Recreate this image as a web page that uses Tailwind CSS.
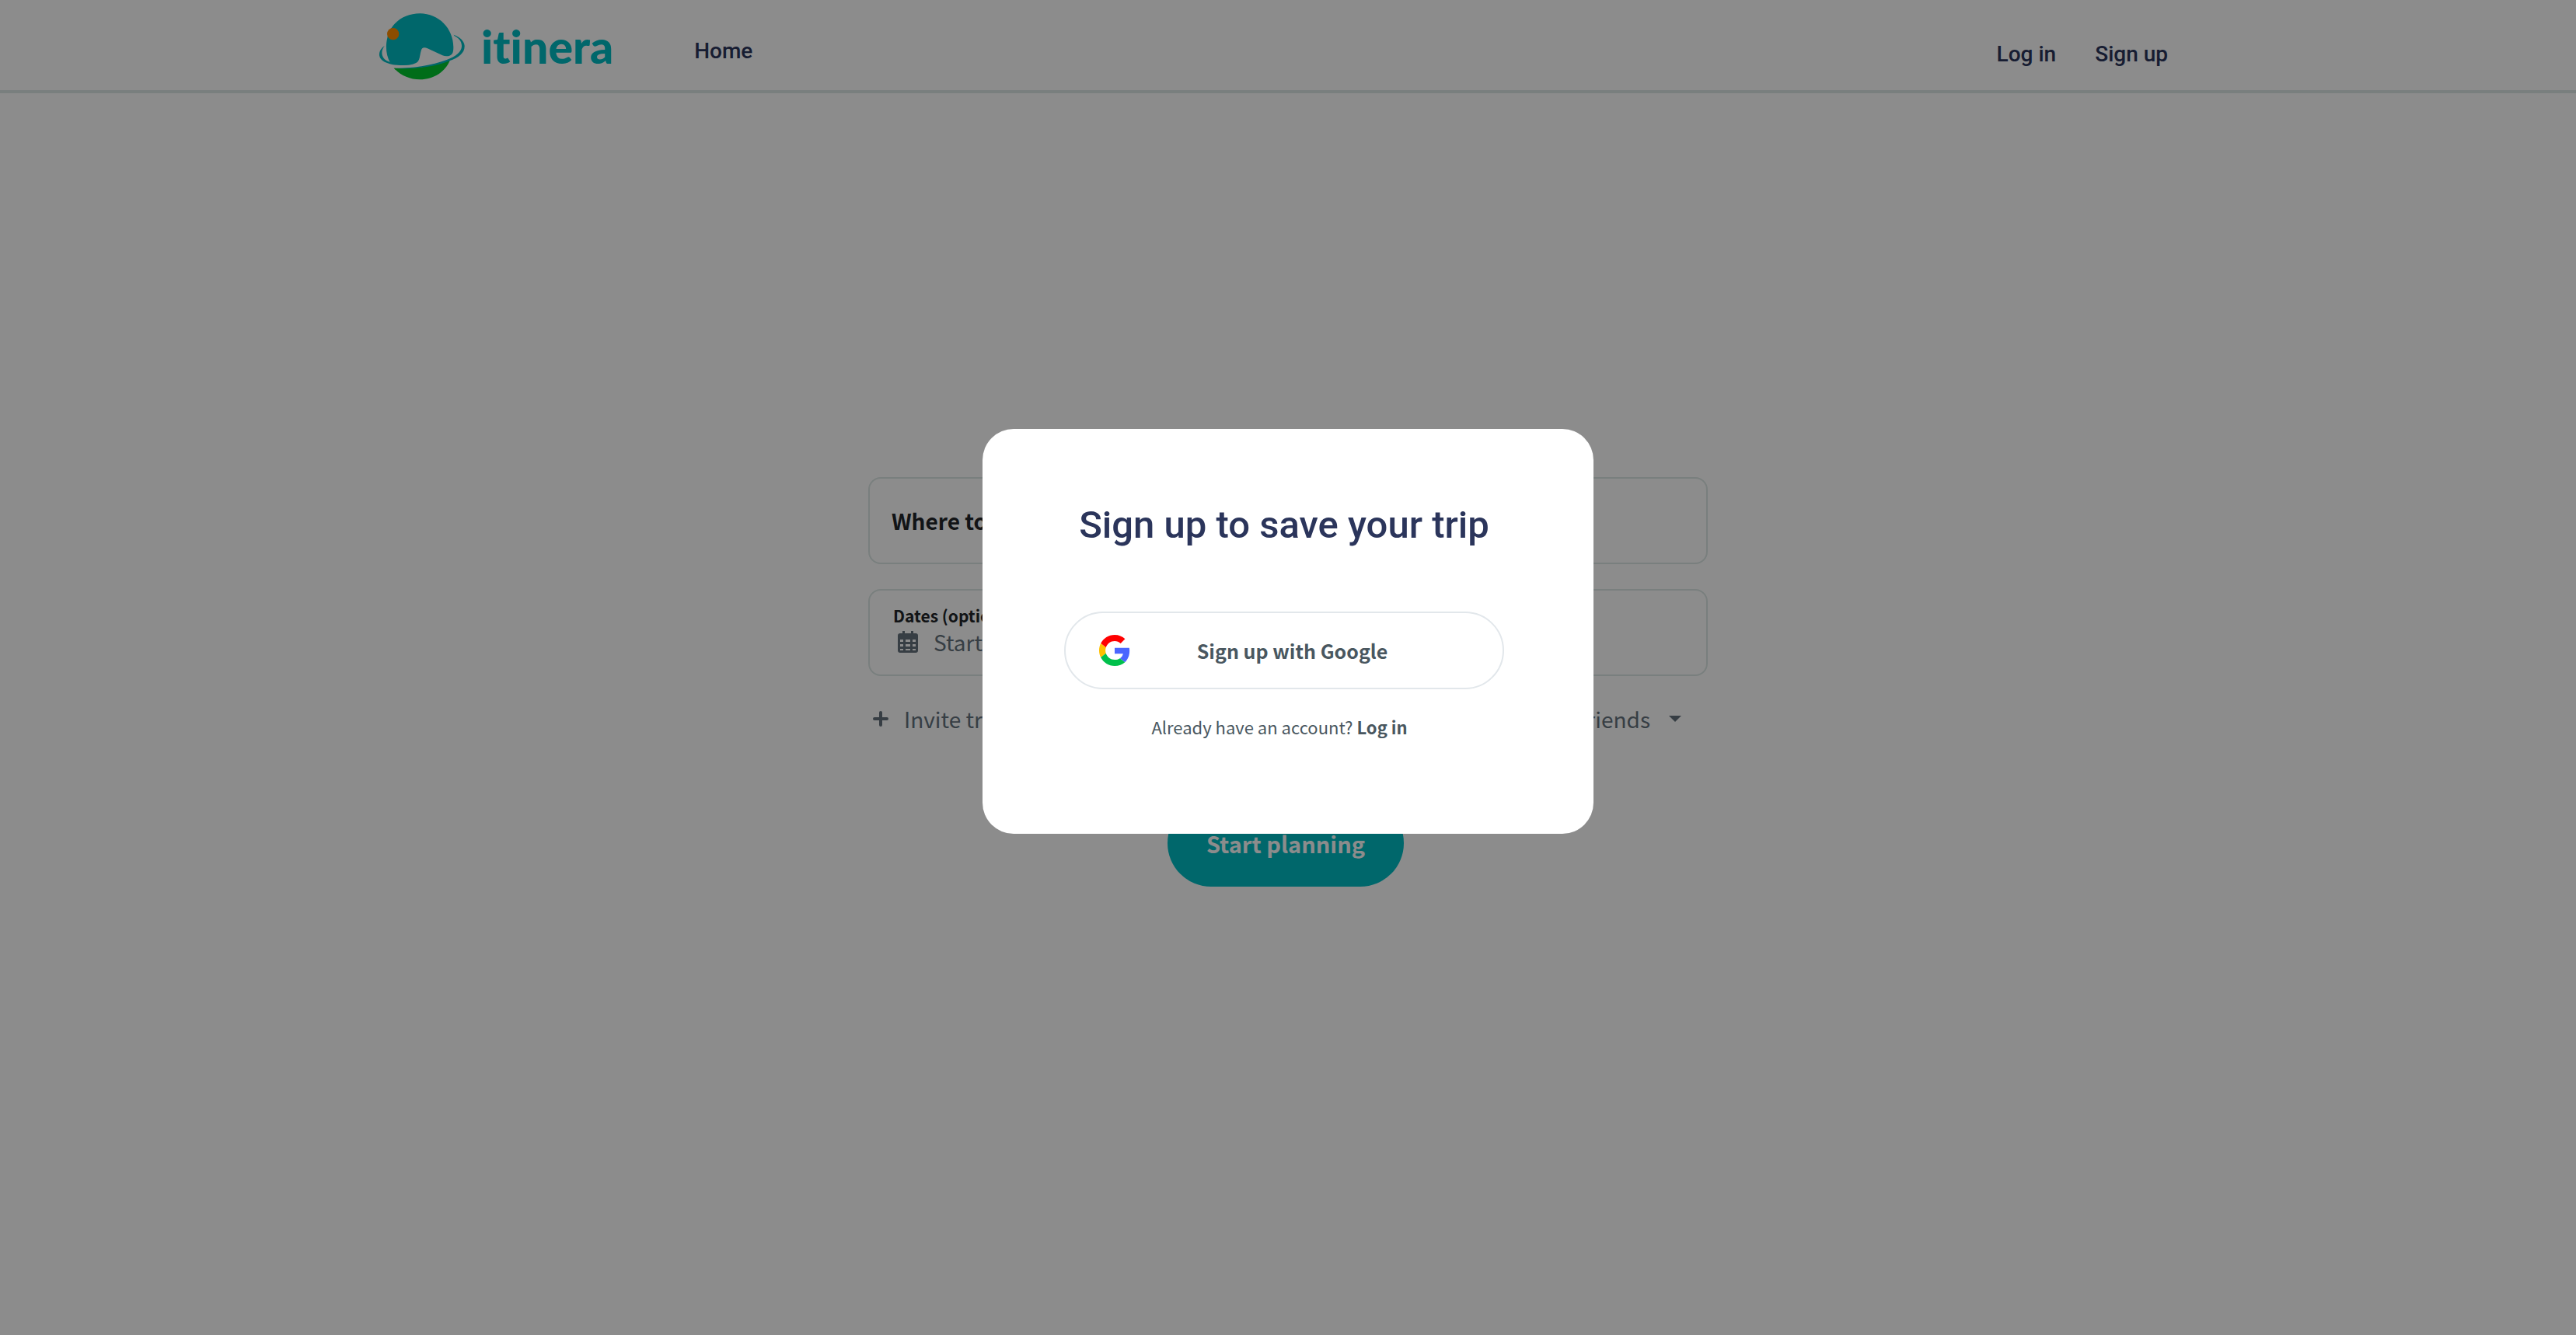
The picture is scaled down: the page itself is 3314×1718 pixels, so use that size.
<!DOCTYPE html>
<html lang="en">
<head>
<meta charset="utf-8">
<meta name="viewport" content="width=device-width, initial-scale=1">
<title>itinera</title>
<script src="https://cdn.jsdelivr.net/npm/@tailwindcss/browser@4"></script>
</head>
<body class="min-h-screen bg-white font-['Noto_Sans_CJK_SC',sans-serif] text-[#212529]">

<header class="border-b-4 border-[#dde8e6]">
  <div class="mx-auto flex h-[116px] w-full max-w-[2340px] items-center pt-1 pr-[38px] font-['Roboto',sans-serif] text-[28px] leading-8 font-medium text-[#2b355b]">
    <a href="#" class="flex items-center gap-5">
      <svg class="h-[88px] w-28 shrink-0" viewBox="51 47 336 264" aria-hidden="true">
        <path fill="#00bcc4" d="M96 241C80 214 77 176 85 145C96 90 148 51 211 51C283 51 340 109 340 181C340 191 339 199 336 205C330 216 312 219 298 213L240 186C228 181 219 182 216 192C211 207 211 224 205 233C199 243 190 245 178 248C148 253 118 249 96 241Z"/>
        <path fill="#00bcc4" d="M74 176C59 186 53 200 54 213C57 237 95 252 140 251C150 251 165 250 178 248C145 248 115 246 96 239C62 229 56 200 74 176Z"/>
        <path fill="#00c62f" d="M110 262C180 266 265 257 327 231C309 276 264 306 211 306C171 306 136 290 110 262Z"/>
        <path fill="#00bcc4" d="M341 133C366 142 382 158 383 176C384 204 360 222 325 234C258 260 180 268 110 262C185 263 252 252 314 230C350 216 373 198 372 175C371 157 360 146 344 138Z"/>
        <circle cx="107" cy="130" r="23" fill="#ff8c00"/>
      </svg>
      <span class="font-['Lato',sans-serif] text-[59px] leading-[60px] font-black text-[#00bcc4] [font-variant-ligatures:none]">itinera</span>
    </a>
    <nav class="ml-[104px] flex flex-1 items-center justify-between">
      <a href="#" class="pt-3">Home</a>
      <div class="flex gap-[50px] pt-5">
        <a href="#">Log in</a>
        <a href="#">Sign up</a>
      </div>
    </nav>
  </div>
</header>

<main class="mx-auto w-full max-w-[1080px] pt-[494px]">
  <form class="flex flex-col">
    <div class="flex h-28 items-center rounded-2xl border-2 border-[#dde8e6] px-7">
      <input type="text" aria-label="Where to?" placeholder="Where to?" class="w-full bg-transparent text-[28px] leading-10 font-bold placeholder:text-[#212529] placeholder:opacity-100">
    </div>
    <div class="mt-8 flex h-28 flex-col rounded-2xl border-2 border-[#dde8e6] px-[30px] pt-[18px]">
      <label for="start" class="text-[21px] leading-7 font-bold">Dates (optional)</label>
      <div class="flex items-center gap-5 pt-0.5 pl-1.5 text-[#64727d]">
        <svg class="h-7 w-[26px] shrink-0" viewBox="0 0 26 28" fill="currentColor" aria-hidden="true">
          <path fill-rule="evenodd" d="M6 0h3v3h8V0h3v3h3a3 3 0 0 1 3 3v19a3 3 0 0 1-3 3H3a3 3 0 0 1-3-3V6a3 3 0 0 1 3-3h3zM3 11v3h4v-3zM10 11v3h6v-3zM19 11v3h4v-3zM3 17v3h4v-3zM10 17v3h6v-3zM19 17v3h4v-3zM3 23v2h4v-2zM10 23v2h6v-2zM19 23v2h4v-2z"/>
        </svg>
        <input id="start" type="text" placeholder="Start date" class="w-full bg-transparent text-[28px] leading-9 placeholder:text-[#64727d] placeholder:opacity-100">
      </div>
    </div>
    <div class="mt-[35px] flex items-center justify-between pr-[34px] pl-1.5 text-[28px] leading-10 text-[#64727d]">
      <button type="button" class="flex items-center gap-5">
        <svg class="size-5" viewBox="0 0 20 20" fill="none" stroke="currentColor" stroke-width="4" stroke-linecap="round" aria-hidden="true"><path d="M10 2V18M2 10H18"/></svg>
        Invite tripmates
      </button>
      <button type="button" class="flex items-center gap-6">
        Friends
        <svg class="h-2 w-4" viewBox="0 0 16 8" fill="currentColor" aria-hidden="true"><path d="M0 0H16L8 8Z"/></svg>
      </button>
    </div>
    <button type="button" class="mt-[84px] mr-1.5 h-28 self-center rounded-full bg-[#00bcc4] px-[50px] text-[29px] leading-10 font-bold text-white">Start planning</button>
  </form>
</main>

<div class="fixed inset-0 flex items-center justify-center bg-black/45 pb-[93px]">
  <section role="dialog" aria-modal="true" aria-labelledby="dialog-title" class="flex w-full max-w-[786px] flex-col rounded-[40px] bg-white pt-[94px] pr-[115px] pb-[122px] pl-[105px]">
    <h1 id="dialog-title" class="text-center font-['Roboto',sans-serif] text-[49px] leading-[60px] font-medium text-[#2b355b]">Sign up to save your trip</h1>
    <button type="button" class="mt-[81px] flex h-[100px] items-center rounded-full border-2 border-[#e2e7eb] pr-[62px] pl-[43px] text-[25px] leading-8 font-bold text-[#495760]">
      <svg class="size-10 shrink-0" viewBox="0 0 48 48" aria-hidden="true">
        <path fill="#ff0000" d="M24 9.500c3.540 0 6.710 1.220 9.210 3.600l6.850-6.850C35.900 2.380 30.470 0 24 0 14.620 0 6.510 5.380 2.560 13.220l7.980 6.190C12.430 13.720 17.740 9.500 24 9.500z"/>
        <path fill="#4a66ff" d="M46.980 24.550c0-1.570-.15-3.090-.38-4.550H24v9.020h12.940c-.58 2.960-2.260 5.480-4.780 7.180l7.730 6c4.510-4.180 7.090-10.360 7.090-17.650z"/>
        <path fill="#ffc000" d="M10.530 28.590c-.48-1.450-.76-2.990-.76-4.590s.27-3.140.76-4.590l-7.980-6.190C.92 16.460 0 20.120 0 24c0 3.880.92 7.540 2.560 10.780l7.970-6.190z"/>
        <path fill="#00c04b" d="M24 48c6.480 0 11.930-2.130 15.890-5.810l-7.730-6c-2.150 1.450-4.920 2.300-8.160 2.300-6.260 0-11.570-4.220-13.470-9.910l-7.980 6.190C6.510 42.620 14.620 48 24 48z"/>
      </svg>
      <span class="flex-1 text-center">Sign up with Google</span>
    </button>
    <p class="mt-8 pr-3 text-center text-[22px] leading-8 text-[#495760]">Already have an account? <a href="#" class="font-bold">Log in</a></p>
  </section>
</div>
</body>
</html>
